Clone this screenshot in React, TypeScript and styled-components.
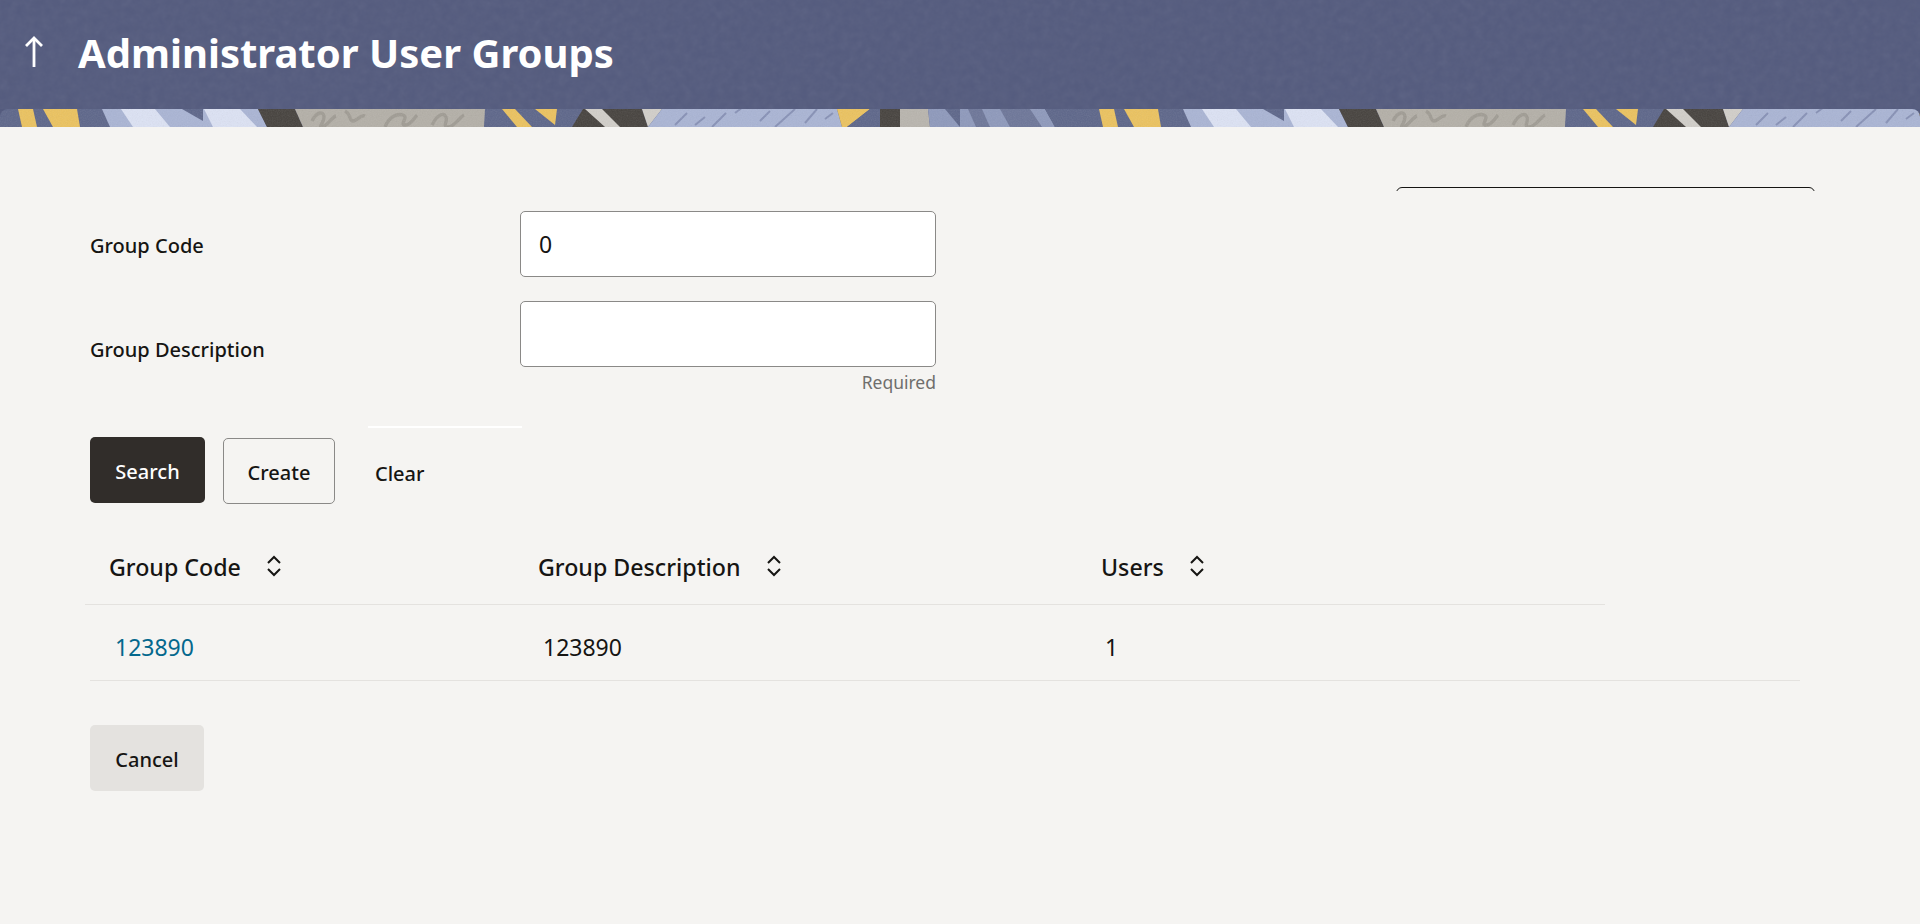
import React from 'react';
import styled, { createGlobalStyle } from 'styled-components';

const GlobalStyle = createGlobalStyle`
  html, body {
    margin: 0;
    padding: 0;
    background: #f5f4f2;
    font-family: 'Noto Sans', 'Open Sans', sans-serif;
    color: #161513;
  }
  * {
    box-sizing: border-box;
  }
`;

const Page = styled.div`
  min-height: 924px;
  background: #f5f4f2;
`;
const Header = styled.header`
  position: relative;
  height: 127px;
  background: #545b7e;
  display: flex;
  flex-direction: column;
`;
const Texture = styled.svg`
  position: absolute;
  left: 0;
  top: 0;
  width: 100%;
  height: 109px;
  opacity: 0.07;
`;
const TitleBar = styled.div`
  position: relative;
  height: 109px;
  display: flex;
  align-items: center;
  padding-left: 24px;
  color: #fff;
`;
const BackIcon = styled.svg`
  width: 20px;
  height: 32px;
  margin-right: 34px;
  margin-top: -6px;
`;
const Title = styled.h1`
  margin: 0;
  font-size: 40px;
  font-weight: 700;
  line-height: 1;
  margin-top: -3px;
`;
const Band = styled.svg`
  display: block;
  width: 100%;
  height: 18px;
  border-radius: 8px 8px 0 0;
`;
const Content = styled.main`
  position: relative;
  padding: 84px 0 0 90px;
`;
const ClippedMenu = styled.div`
  position: absolute;
  left: 1396px;
  top: 60px;
  width: 419px;
  height: 4px;
  overflow: hidden;
  &::before {
    content: '';
    display: block;
    height: 20px;
    border: 1px solid #161513;
    border-radius: 6px;
  }
`;
const FormRow = styled.div`
  display: flex;
  align-items: center;
  margin-bottom: 24px;
`;
const Label = styled.label`
  width: 430px;
  padding-top: 2px;
  font-size: 20px;
  font-weight: 500;
`;
const Field = styled.div`
  width: 416px;
`;
const Input = styled.input`
  display: block;
  width: 100%;
  height: 66px;
  padding: 0 18px;
  border: 1px solid #8a8987;
  border-radius: 5px;
  background: #fff;
  font-family: inherit;
  font-size: 23px;
  color: #161513;
  outline: none;
`;
const Helper = styled.div`
  height: 28px;
  padding-top: 3px;
  text-align: right;
  font-size: 17.5px;
  line-height: 24px;
  color: #6f6e6c;
`;
const Actions = styled.div`
  position: relative;
  display: flex;
  align-items: flex-start;
  margin-top: 42px;
`;
const WhiteRule = styled.div`
  position: absolute;
  left: 278px;
  top: -11px;
  width: 154px;
  height: 2px;
  background: #fff;
`;
const Button = styled.button<{ $variant: 'primary' | 'outline' | 'ghost' | 'muted' }>`
  height: 66px;
  border-radius: 5px;
  font-family: inherit;
  font-size: 20px;
  font-weight: 500;
  padding: 2px 0 0;
  cursor: pointer;
  border: 1px solid
    ${({ $variant }) => ($variant === 'outline' ? '#8a8987' : 'transparent')};
  background: ${({ $variant }) =>
    $variant === 'primary'
      ? '#312d2a'
      : $variant === 'muted'
        ? '#e4e2df'
        : 'transparent'};
  color: ${({ $variant }) => ($variant === 'primary' ? '#fff' : '#161513')};
`;
const SearchButton = styled(Button)`
  width: 115px;
`;
const CreateButton = styled(Button)`
  width: 112px;
  margin: 1px 0 0 18px;
`;
const ClearButton = styled(Button)`
  width: 48px;
  margin: 2px 0 0 39px;
`;
const CancelButton = styled(Button)`
  width: 114px;
  display: block;
  margin-top: 44px;
`;
const HeadRow = styled.div`
  display: grid;
  grid-template-columns: 429px 563px 1fr;
  align-items: center;
  width: 1520px;
  height: 75px;
  margin: 25px 0 0 -5px;
  padding: 0 0 0 24px;
  border-bottom: 1px solid #e4e2df;
`;
const HeadCell = styled.div`
  display: flex;
  align-items: center;
  gap: 25px;
  font-size: 23.2px;
  font-weight: 500;
`;
const SortIcon = styled.svg`
  width: 16px;
  height: 22px;
  margin-top: -3px;
`;
const BodyRow = styled.div`
  display: grid;
  grid-template-columns: 428px 562px 1fr;
  align-items: center;
  width: 1710px;
  height: 76px;
  padding: 9px 0 0 25px;
  border-bottom: 1px solid #e4e2df;
  font-size: 23px;
`;
const CodeLink = styled.a`
  color: #04688d;
  text-decoration: none;
`;

const SortArrows = () => (
  <SortIcon viewBox="0 0 16 22" fill="none" stroke="#161513" strokeWidth="2">
    <path d="M2 8l6-6 6 6" />
    <path d="M2 14l6 6 6-6" />
  </SortIcon>
);

// one repeat of the header artwork, it tiles every 1081px
const tile: [string, string][] = [
  ['#5d668a', '0,0 103,0 110,18 0,18'],
  ['#ecc35f', '18,0 33,0 37,18 22,18'],
  ['#ecc35f', '43,0 77,0 80,18 53,18'],
  ['#aab5d5', '102,0 258,0 267,18 110,18'],
  ['#dde3f5', '121,0 155,0 170,18 133,18'],
  ['#dde3f5', '204,0 240,0 257,18 213,18'],
  ['#5d668a', '182,0 203,0 203,12'],
  ['#46423e', '258,0 295,0 303,18 267,18'],
  ['#b4b0a8', '295,0 487,0 484,18 303,18'],
  ['#5d668a', '485,0 583,0 572,18 484,18'],
  ['#ecc35f', '502,0 515,0 532,18 517,18'],
  ['#ecc35f', '535,0 557,0 555,16'],
  ['#46423e', '583,0 642,0 648,18 572,18'],
  ['#d2cfca', '585,0 602,0 620,18 605,18'],
  ['#d2cfca', '642,0 662,0 648,18'],
  ['#aab5d5', '662,0 837,0 842,18 648,18'],
  ['#ecc35f', '837,0 870,0 847,18 842,18'],
  ['#5d668a', '870,0 880,0 880,18 847,18'],
  ['#46423e', '880,0 900,0 900,18 880,18'],
  ['#b9b5ae', '900,0 928,0 930,18 900,18'],
  ['#8e99bc', '928,0 1045,0 1055,18 930,18'],
  ['#5d668a', '945,0 960,0 960,18'],
  ['#6d7699', '968,0 982,0 990,18 976,18'],
  ['#6d7699', '1000,0 1030,0 1042,18 1010,18'],
  ['#5d668a', '1045,0 1081,0 1081,18 1055,18'],
];

const squiggles = [
  'M312 12c5-10 12-10 12-4s-6 10-2 10 10-10 14-11',
  'M345 2c6 3 4 10 8 10s8-7 12-5',
  'M385 18c4-10 12-14 18-12s-4 10 2 10 10-8 12-10',
  'M432 16c6-12 12-12 14-8s-4 10 2 10 12-10 16-12',
];
const dashes = [
  'M675 16l12-12',
  'M695 16l10-8',
  'M712 18l14-14',
  'M735 4l8-6',
  'M760 12l10-10',
  'M775 18l20-18',
  'M805 14l12-14',
  'M825 10l8-6',
];

const HeaderBand = () => (
  <Band preserveAspectRatio="none">
    <defs>
      <pattern id="bandTile" width="1081" height="18" patternUnits="userSpaceOnUse">
        {tile.map(([fill, points]) => (
          <polygon key={points} fill={fill} points={points} />
        ))}
        {squiggles.map((d) => (
          <path key={d} d={d} fill="none" stroke="#a09c94" strokeWidth="3.4" />
        ))}
        {dashes.map((d) => (
          <path key={d} d={d} fill="none" stroke="#8791b6" strokeWidth="2" />
        ))}
      </pattern>
      <filter id="speckle">
        <feTurbulence type="fractalNoise" baseFrequency="0.8" numOctaves="2" />
        <feColorMatrix type="saturate" values="0" />
      </filter>
    </defs>
    <rect width="100%" height="18" fill="url(#bandTile)" />
    <rect width="100%" height="18" filter="url(#speckle)" opacity="0.14" />
  </Band>
);

const App = () => {
  return (
    <Page>
      <GlobalStyle />
      <Header>
        <Texture>
          <filter id="grain">
            <feTurbulence type="fractalNoise" baseFrequency="0.12" numOctaves="3" />
            <feColorMatrix type="saturate" values="0" />
          </filter>
          <rect width="100%" height="100%" filter="url(#grain)" />
        </Texture>
        <TitleBar>
          <BackIcon viewBox="0 0 20 32" fill="none" stroke="#fff" strokeWidth="2.8">
            <path d="M10 31V2" />
            <path d="M2 10l8-8 8 8" />
          </BackIcon>
          <Title>Administrator User Groups</Title>
        </TitleBar>
        <HeaderBand />
      </Header>
      <Content>
        <ClippedMenu />
        <FormRow>
          <Label>Group Code</Label>
          <Field>
            <Input defaultValue="0" />
          </Field>
        </FormRow>
        <FormRow>
          <Label>Group Description</Label>
          <Field>
            <Input />
            <Helper>Required</Helper>
          </Field>
        </FormRow>
        <Actions>
          <WhiteRule />
          <SearchButton $variant="primary">Search</SearchButton>
          <CreateButton $variant="outline">Create</CreateButton>
          <ClearButton $variant="ghost">Clear</ClearButton>
        </Actions>
        <HeadRow>
          <HeadCell>
            Group Code
            <SortArrows />
          </HeadCell>
          <HeadCell>
            Group Description
            <SortArrows />
          </HeadCell>
          <HeadCell>
            Users
            <SortArrows />
          </HeadCell>
        </HeadRow>
        <BodyRow>
          <CodeLink href="#">123890</CodeLink>
          <div>123890</div>
          <div>1</div>
        </BodyRow>
        <CancelButton $variant="muted">Cancel</CancelButton>
      </Content>
    </Page>
  );
};

export default App;
